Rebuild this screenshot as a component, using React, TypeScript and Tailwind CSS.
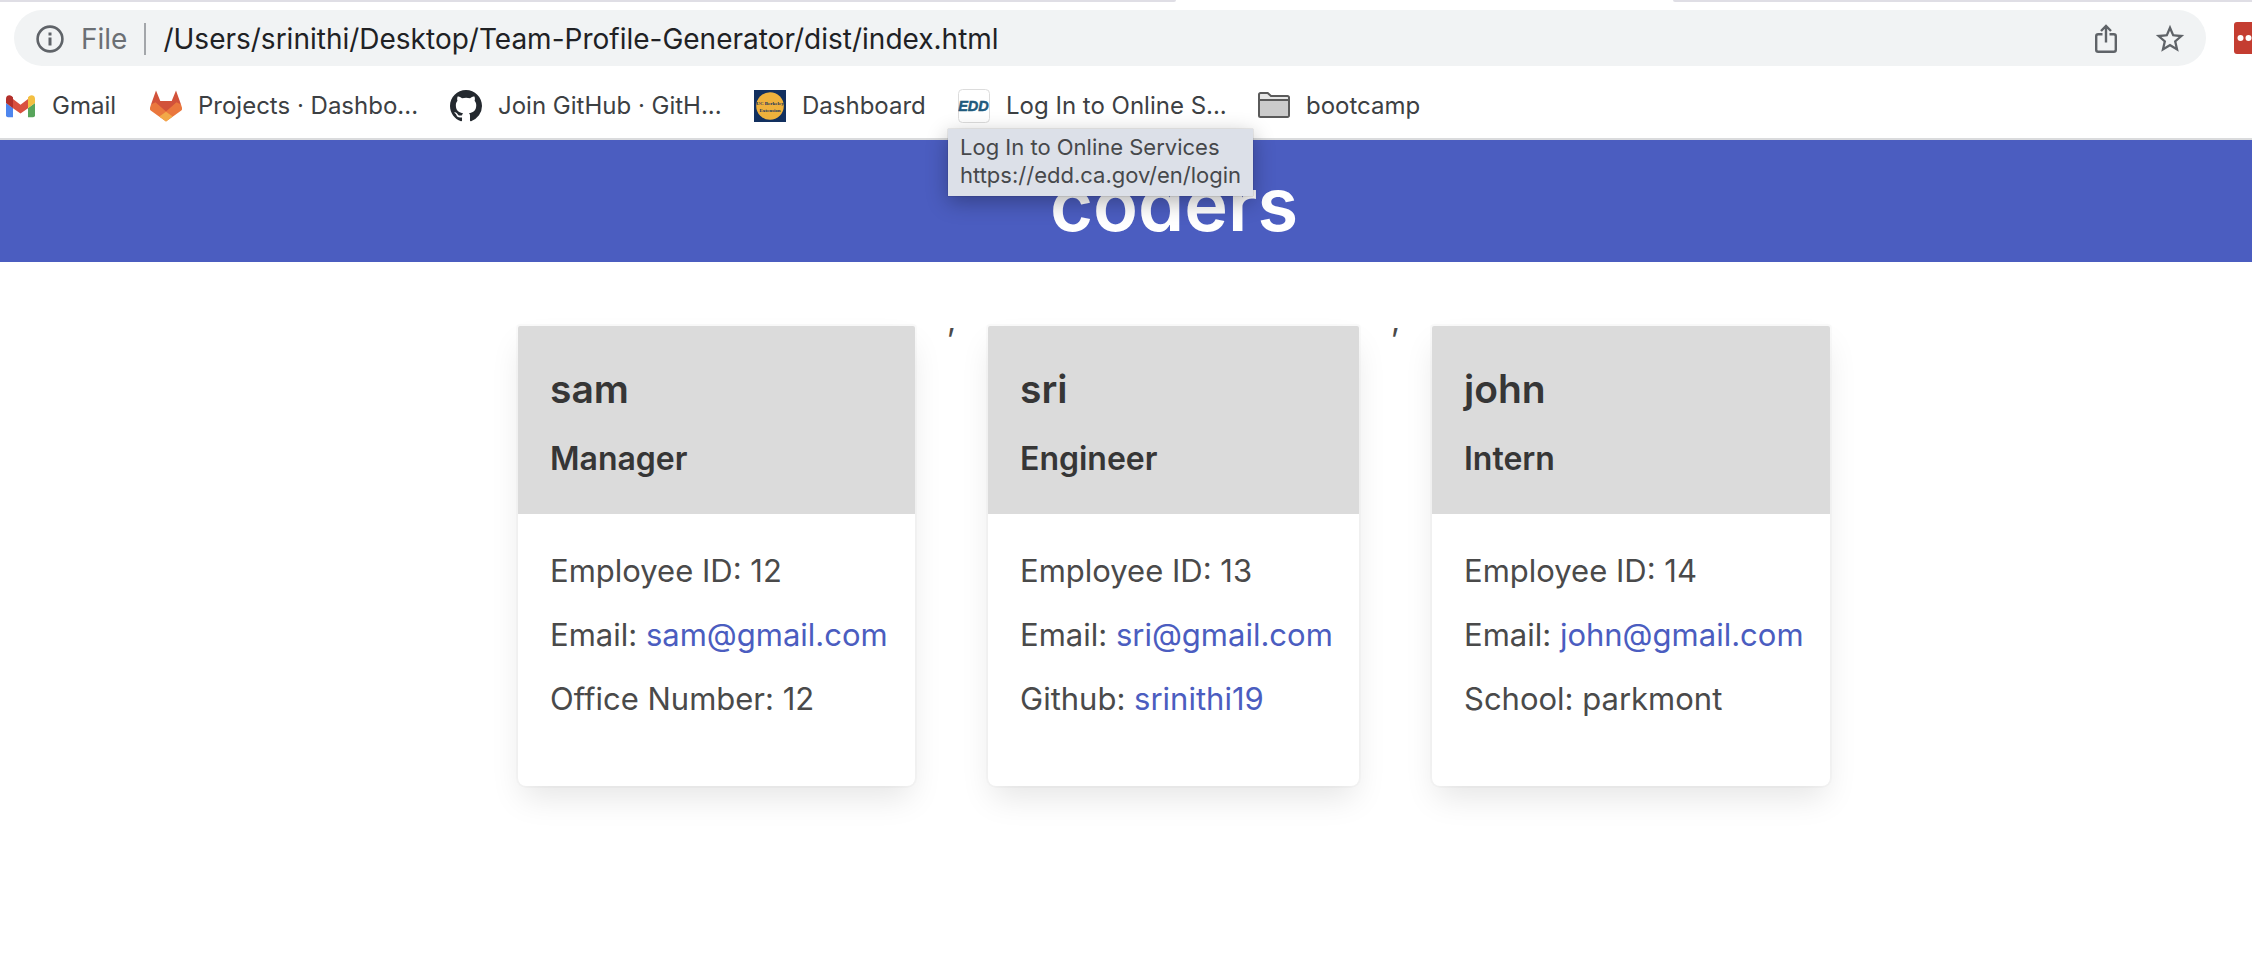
import type { ReactNode } from "react";

const FONT = "font-['Inter','Liberation_Sans',sans-serif]";

function InfoIcon() {
  return (
    <svg viewBox="0 0 28 28" className="size-7 shrink-0" fill="none" aria-hidden="true">
      <circle cx="14" cy="14" r="12.4" stroke="#5f6368" strokeWidth="2.6" />
      <rect x="12.5" y="7.5" width="3" height="3" fill="#5f6368" />
      <rect x="12.5" y="12.5" width="3" height="8" fill="#5f6368" />
    </svg>
  );
}

function ShareIcon() {
  return (
    <svg viewBox="0 0 24 30" className="h-[30px] w-6" fill="none" stroke="#5f6368" strokeWidth="2.4" aria-hidden="true">
      <path d="M8.5 10.2H4.2a2 2 0 0 0-2 2v13.6a2 2 0 0 0 2 2h15.6a2 2 0 0 0 2-2V12.2a2 2 0 0 0-2-2h-4.3" />
      <path d="M12 18.5V2.5M7 7l5-5 5 5" />
    </svg>
  );
}

function StarIcon() {
  return (
    <svg viewBox="0 0 24 24" className="size-[34px]" fill="#5f6368" aria-hidden="true">
      <path d="M22 9.24l-7.19-.62L12 2 9.19 8.63 2 9.24l5.46 4.73L5.82 21 12 17.27 18.18 21l-1.63-7.03L22 9.24zM12 15.4l-3.76 2.27 1-4.28-3.32-2.88 4.38-.38L12 6.1l1.71 4.04 4.38.38-3.32 2.88 1 4.28L12 15.4z" />
    </svg>
  );
}

function GmailIcon() {
  return (
    <svg viewBox="0 0 32 32" className="size-8 shrink-0" aria-hidden="true">
      <path fill="#4e86ee" d="M2 13v12.2a2 2 0 0 0 2 2h5V18z" />
      <path fill="#58a55c" d="M31 13v12.2a2 2 0 0 1-2 2h-5V18z" />
      <path fill="#d95040" d="M9 9l7.5 5.8L24 9v9.2l-7.5 5.4L9 18.2z" />
      <path fill="#b3302b" d="M2 8.6C2 5.500 5.400 4.400 7.600 6L9 7.200v11L2 13z" />
      <path fill="#f3bf42" d="M31 8.600C31 5.500 27.600 4.400 25.400 6L24 7.200v11L31 13z" />
    </svg>
  );
}

function GitlabIcon() {
  return (
    <svg viewBox="0 0 32 32" className="size-8 shrink-0" aria-hidden="true">
      <path fill="#d2523a" d="M6 .5 10.300 11h11.400L26 .5 31 14.500 16 25.500 1 14.500z" />
      <path fill="#ea773d" d="M1 14.500-.1 18c-.2 1 .1 1.800.8 2.400L16 31.500l15.300-11.100c.7-.6 1-1.400.8-2.400L31 14.500l-4.500-2.200L16 21.500 5.500 12.300z" />
      <path fill="#f2a948" d="M16 31.500 9.300 26.600 16 21.800l6.700 4.800z" />
    </svg>
  );
}

function GithubIcon() {
  return (
    <svg viewBox="0 0 16 16" className="size-8 shrink-0" fill="#24292f" aria-hidden="true">
      <path d="M8 0C3.580 0 0 3.580 0 8c0 3.540 2.290 6.530 5.470 7.590.4.070.55-.17.55-.38 0-.19-.01-.82-.01-1.490-2.010.37-2.530-.49-2.690-.94-.09-.23-.48-.94-.82-1.130-.28-.15-.68-.52-.01-.53.63-.01 1.080.58 1.230.82.72 1.210 1.870.87 2.330.66.070-.52.28-.87.51-1.070-1.780-.2-3.640-.89-3.640-3.950 0-.87.31-1.590.82-2.150-.08-.2-.36-1.020.08-2.120 0 0 .67-.21 2.200.82.64-.18 1.320-.27 2-.27s1.360.09 2 .27c1.530-1.040 2.200-.82 2.200-.82.44 1.100.16 1.920.08 2.120.51.56.82 1.270.82 2.150 0 3.070-1.870 3.750-3.650 3.950.29.25.54.73.54 1.480 0 1.070-.01 1.930-.01 2.200 0 .21.15.46.55.38A8.010 8.010 0 0 0 16 8c0-4.420-3.580-8-8-8z" />
    </svg>
  );
}

function BerkeleyIcon() {
  return (
    <svg viewBox="0 0 32 32" className="size-8 shrink-0" aria-hidden="true">
      <rect width="32" height="32" fill="#12305f" />
      <circle cx="16" cy="16" r="13.800" fill="#eeb13c" />
      <g fill="#12305f" fontFamily="Liberation Serif, serif" fontWeight="700" fontSize="5" textAnchor="middle">
        <text x="16" y="15">UC Berkeley</text>
        <text x="16" y="21.500">Extension</text>
      </g>
    </svg>
  );
}

function EddIcon() {
  return (
    <svg viewBox="0 0 32 34" className="h-[34px] w-8 shrink-0" aria-hidden="true">
      <rect x=".5" y=".5" width="31" height="33" rx="4" fill="#fff" stroke="#dcdcdc" />
      <text x="15.500" y="22" fill="#215a7c" stroke="#215a7c" strokeWidth=".5" fontFamily="Liberation Sans, sans-serif" fontWeight="700" fontStyle="italic" fontSize="14.500" textAnchor="middle">EDD</text>
    </svg>
  );
}

function FolderIcon() {
  return (
    <svg viewBox="0 0 32 32" className="size-8 shrink-0" fill="#cbcbcb" stroke="#5a5a5a" strokeWidth="2" aria-hidden="true">
      <path fill="#e6e6e6" d="M1 9V4.500A1.500 1.500 0 0 1 2.500 3h7.200L13 6h16.500A1.500 1.500 0 0 1 31 7.500V10H1z" />
      <path d="M1 10h30v15.500A1.500 1.500 0 0 1 29.500 27h-27A1.500 1.500 0 0 1 1 25.500z" />
    </svg>
  );
}

type BookmarkProps = { icon: ReactNode; label: string; width: string; href: string; children?: ReactNode };

function Bookmark({ icon, label, width, href, children }: BookmarkProps) {
  return (
    <li className="relative">
      <a href={href} className="flex h-9 items-center gap-4">
        {icon}
        <span className={`whitespace-nowrap ${width}`}>{label}</span>
      </a>
      {children}
    </li>
  );
}

type Employee = { name: string; role: string; id: number; email: string; extra: ReactNode; width: string };

const link = "text-[#4b5dc0]";

const team: Employee[] = [
  { name: "sam", role: "Manager", id: 12, email: "sam@gmail.com", extra: <>Office Number: 12</>, width: "w-[397px]" },
  {
    name: "sri",
    role: "Engineer",
    id: 13,
    email: "sri@gmail.com",
    extra: (
      <>
        Github: <a href="https://github.com/srinithi19" className={link}>srinithi19</a>
      </>
    ),
    width: "w-[371px]",
  },
  { name: "john", role: "Intern", id: 14, email: "john@gmail.com", extra: <>School: parkmont</>, width: "w-[398px]" },
];

function Card({ person }: { person: Employee }) {
  return (
    <article className={`shrink-0 overflow-hidden rounded-t-[2px] rounded-b-lg bg-white shadow-[0_16px_32px_-4px_rgba(10,10,10,0.1),0_0_0_2px_rgba(10,10,10,0.02)] ${person.width}`}>
      <header className="flex flex-col gap-4 bg-[#dbdbdb] px-8 pt-[33px] pb-[31px] text-[#363636]">
        <h2 className="text-[39px] leading-[60px] font-semibold">{person.name}</h2>
        <h3 className="text-[32px] leading-[48px] font-semibold">{person.role}</h3>
      </header>
      <div className="flex flex-col gap-4 px-8 pt-[33px] pb-[63px] text-[31px] leading-[48px] whitespace-nowrap text-[#4a4a4a]">
        <p>Employee ID: {person.id}</p>
        <p>
          Email: <a href={`mailto:${person.email}`} className={link}>{person.email}</a>
        </p>
        <p>{person.extra}</p>
      </div>
    </article>
  );
}

function Separator() {
  return <span className="-mt-[30px] w-[9px] text-[32px] leading-[48px] text-[#4a4a4a]">,</span>;
}

export default function App() {
  return (
    <div className={`min-h-screen overflow-x-hidden bg-white ${FONT}`}>
      <div className="border-b-2 border-[#dadbdd]">
        <div className="flex h-0.5 justify-between">
          <div className="w-[52.2%] rounded-br-sm bg-[#dfdee5]" />
          <div className="w-[25.7%] rounded-bl-sm bg-[#dfdee5]" />
        </div>
        <div className="flex items-center pt-2 pl-3.5">
          <div className="flex h-14 flex-1 items-center rounded-full bg-[#f1f3f4] pt-0.5 pr-[19px] pl-[22px] text-[28px]">
            <InfoIcon />
            <span className="ml-[17px] text-[#6b6f74]">File</span>
            <span className="mx-[17px] h-8 w-0.5 bg-[#a3a6aa]" />
            <input
              aria-label="Address"
              defaultValue="/Users/srinithi/Desktop/Team-Profile-Generator/dist/index.html"
              className="min-w-0 flex-1 bg-transparent text-[#202124] outline-none"
            />
            <div className="flex items-center gap-[35px]">
              <button aria-label="Share this page"><ShareIcon /></button>
              <button aria-label="Bookmark this tab"><StarIcon /></button>
            </div>
          </div>
          <button aria-label="Password manager" className="ml-7 w-[18px] overflow-hidden">
            <svg viewBox="0 0 32 32" className="size-8 max-w-none" aria-hidden="true">
              <rect width="32" height="32" rx="3" fill="#c43d31" />
              <circle cx="6.500" cy="16" r="3" fill="#fff" />
              <circle cx="14.500" cy="16" r="3" fill="#fff" />
              <circle cx="22.500" cy="16" r="3" fill="#fff" />
            </svg>
          </button>
        </div>
        <ul className="flex h-[72px] items-center gap-[34px] pt-2 pl-1 text-[24px] text-[#3c4043]">
          <Bookmark icon={<GmailIcon />} label="Gmail" width="w-16" href="#gmail" />
          <Bookmark icon={<GitlabIcon />} label="Projects · Dashbo..." width="w-[218px]" href="#projects" />
          <Bookmark icon={<GithubIcon />} label="Join GitHub · GitH..." width="w-[222px]" href="#github" />
          <Bookmark icon={<BerkeleyIcon />} label="Dashboard" width="w-[122px]" href="#dashboard" />
          <Bookmark icon={<EddIcon />} label="Log In to Online S..." width="w-[218px]" href="https://edd.ca.gov/en/login">
            <div role="tooltip" className="absolute top-[41px] -left-2.5 z-10 bg-[#dce0e8] px-3 pt-1 pb-[7px] text-[22px] leading-7 whitespace-nowrap text-[#46484b] shadow-[0_6px_20px_rgba(0,0,0,0.3),0_0_1px_rgba(0,0,0,0.4)]">
              <p>Log In to Online Services</p>
              <p>https://edd.ca.gov/en/login</p>
            </div>
          </Bookmark>
          <Bookmark icon={<FolderIcon />} label="bootcamp" width="w-[116px]" href="#bootcamp" />
        </ul>
      </div>

      <header className="flex h-[122px] items-center justify-center bg-[#4b5dc0] pt-1.5 pl-24">
        <h1 className="text-[74px] leading-none font-semibold text-white">coders</h1>
      </header>

      <main className="flex items-start justify-center gap-8 py-16 pl-24">
        <Card person={team[0]} />
        <Separator />
        <Card person={team[1]} />
        <Separator />
        <Card person={team[2]} />
      </main>
    </div>
  );
}
